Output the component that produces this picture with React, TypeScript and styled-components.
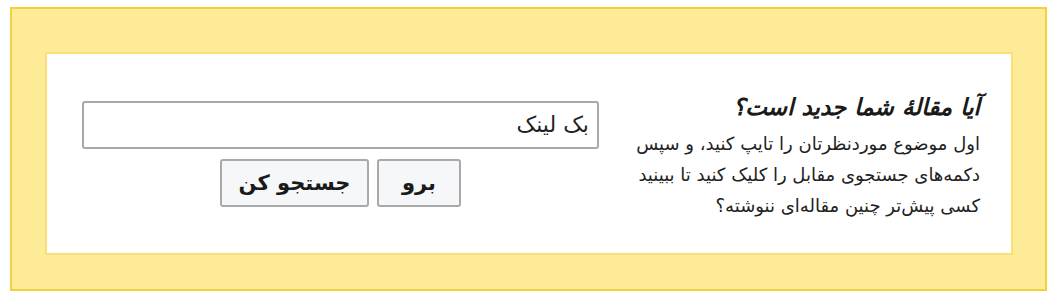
import React from "react";
import styled, { createGlobalStyle } from "styled-components";

const Global = createGlobalStyle`
  html, body { margin: 0; padding: 0; background: #ffffff; }
  body { font-family: "DejaVu Sans", sans-serif; }
`;

const Outer = styled.div`
  box-sizing: border-box;
  margin: 7px 12px 0 10px;
  width: 1037px;
  height: 284px;
  background: #fdeb98;
  border: 2px solid #f1d13c;
  padding: 43px 32px 34px 33px;
  display: flex;
`;

const Panel = styled.div`
  box-sizing: border-box;
  flex: 1;
  background: #ffffff;
  border: 2px solid #f8df76;
  display: flex;
  direction: rtl;
  align-items: center;
  justify-content: space-between;
  padding: 0 31px 0 35px;
`;

const TextCol = styled.div`
  width: 360px;
  padding-top: 6px;
  color: #222;
`;

const Title = styled.h2`
  margin: 0 0 6px;
  font-size: 23px;
  font-weight: bold;
  font-style: italic;
  color: #1a1a1a;
  line-height: 30px;
`;

const Para = styled.p`
  margin: 0;
  font-size: 18px;
  line-height: 31px;
  color: #222;
`;

const FormCol = styled.div`
  width: 517px;
  display: flex;
  flex-direction: column;
  align-items: center;
  gap: 10px;
`;

const Input = styled.input`
  box-sizing: border-box;
  width: 100%;
  height: 48px;
  border: 2px solid #a9a9a9;
  border-radius: 3px;
  padding: 0 8px;
  font-family: "DejaVu Sans", sans-serif;
  font-size: 22px;
  color: #222;
  direction: rtl;
  outline: none;
`;

const Buttons = styled.div`
  display: flex;
  gap: 8px;
`;

const Btn = styled.button<{ $w: number }>`
  box-sizing: border-box;
  width: ${(p) => p.$w}px;
  height: 48px;
  padding: 0;
  background: #f6f7f8;
  border: 2px solid #a9a9a9;
  border-radius: 3px;
  font-family: "DejaVu Sans", sans-serif;
  font-size: 21px;
  font-weight: bold;
  color: #1a1a1a;
  cursor: pointer;
`;

export default function App() {
  return (
    <>
      <Global />
      <Outer>
        <Panel>
          <TextCol>
            <Title>آیا مقالهٔ شما جدید است؟</Title>
            <Para>
              اول موضوع موردنظرتان را تایپ کنید، و سپس دکمه‌های جستجوی مقابل را کلیک کنید تا ببینید کسی پیش‌تر چنین مقاله‌ای ننوشته؟
            </Para>
          </TextCol>
          <FormCol>
            <Input defaultValue="بک لینک" />
            <Buttons>
              <Btn $w={84}>برو</Btn>
              <Btn $w={149}>جستجو کن</Btn>
            </Buttons>
          </FormCol>
        </Panel>
      </Outer>
    </>
  );
}
